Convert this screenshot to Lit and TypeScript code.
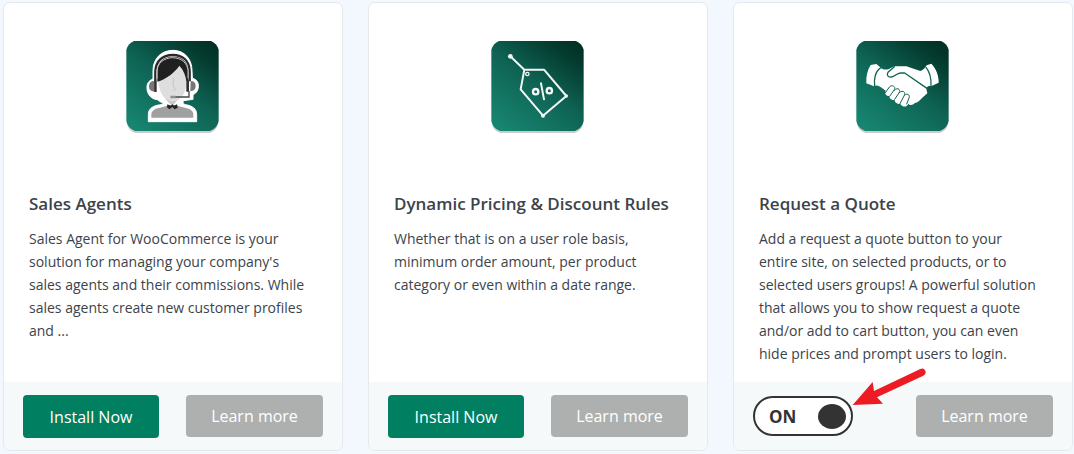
import { LitElement, html, svg, css } from "lit";
import { customElement, property } from "lit/decorators.js";

type IconName = "agent" | "tag" | "handshake";

interface Addon {
  icon: IconName;
  title: string;
  text: string;
  installed: boolean;
}

const ADDONS: Addon[] = [
  {
    icon: "agent",
    title: "Sales Agents",
    text: "Sales Agent for WooCommerce is your solution for managing your company's sales agents and their commissions. While sales agents create new customer profiles and ...",
    installed: false,
  },
  {
    icon: "tag",
    title: "Dynamic Pricing & Discount Rules",
    text: "Whether that is on a user role basis, minimum order amount, per product category or even within a date range.",
    installed: false,
  },
  {
    icon: "handshake",
    title: "Request a Quote",
    text: "Add a request a quote button to your entire site, on selected products, or to selected users groups! A powerful solution that allows you to show request a quote and/or add to cart button, you can even hide prices and prompt users to login.",
    installed: true,
  },
];

const GLYPHS = {
  agent: svg`
    <path d="M189 61C152 61 129 88 129 122L129 147C114 153 110 163 111 176C112 193 123 207 142 209C147 213 151 216 158 218C160 224 154 223 145 225C124 230 115 238 115 254L115 275H260V254C260 237 249 228 227 224C219 222 218 219 220 212L249 208V194C261 189 266 178 265 165C264 154 259 149 247 144L246 122C246 88 224 61 189 61Z" fill="#fff" stroke="#fff" stroke-width="3" stroke-linejoin="round"/>
    <path d="M124 263V252C125 241 136 235 150 233L178 226H196L225 233C240 236 250 242 250 254V263Z" fill="#a0a0a0"/>
    <path d="M166 207L187 229L205 207V190H166Z" fill="#c9c9c9"/>
    <path d="M144 141C144 181 160 213 187 214C216 214 231 184 231 143L207 105Z" fill="#dedede"/>
    <path d="M191 144C190 158 187 167 194 174C197 178 195 182 190 182" fill="none" stroke="#c2c2c2" stroke-width="3"/>
    <path d="M142 155V125C143 94 161 80 189 80C218 80 234 97 235 125V153H229C227 137 221 121 208 107C198 124 167 149 142 155Z" fill="#202020"/>
    <path d="M136 154V124C137 94 157 75 188 75C220 75 238 94 239 124V154" fill="none" stroke="#292929" stroke-width="7"/>
    <path d="M141 145V122C143 99 161 84 188 83C215 84 232 99 234 122V145" fill="none" stroke="#c8c8c8" stroke-width="3"/>
    <path d="M132 153C122 153 117 159 117 169C117 180 123 185 135 185V153ZM242 153C252 153 257 158 257 168C257 177 252 183 241 184Z" fill="#777"/>
    <path d="M133 152H140V186H133ZM229 151H237V185H229Z" fill="#303030"/>
    <path d="M237 183V201H195" fill="none" stroke="#484848" stroke-width="4"/>
    <path d="M181 201H197" stroke="#929292" stroke-width="7"/>
    <path d="M172 223L182 227L187 223L192 227L201 223L203 233L194 238L187 231L178 238L171 232Z" fill="#222"/>
  `,
  tag: svg`
    <g fill="none" stroke="#f3f7f5" stroke-width="6" stroke-linejoin="round" stroke-linecap="round">
      <path d="M106 79L148 119H207L274 198L204 257L137 178L148 119"/>
      <circle cx="157" cy="132" r="5" stroke-width="4"/>
      <circle cx="182" cy="185" r="8" stroke-width="7"/>
      <circle cx="223" cy="182" r="8" stroke-width="7"/>
      <path d="M198 160L207 208"/>
    </g>
    <g fill="#f3f7f5"><circle cx="106" cy="79" r="7"/><circle cx="274" cy="198" r="5"/><circle cx="204" cy="257" r="6"/></g>
  `,
  handshake: svg`
    <path d="M92 105L109 102L126 116C135 120 143 120 152 114L163 109H199L241 123C250 120 257 112 260 106L274 101C289 116 297 138 296 158L273 169C266 167 263 167 259 176L262 190L246 204C239 211 234 218 224 219C218 227 208 226 205 221C200 232 189 233 181 222C169 223 163 214 164 210C152 211 147 203 148 198C138 198 133 190 137 182L126 174C117 168 110 164 102 169L79 160C78 139 82 120 92 105Z" fill="#fff"/>
    <g fill="none" stroke="#126554" stroke-width="4" stroke-linecap="round" stroke-linejoin="round">
      <path d="M123 113C106 123 101 147 104 168M258 112C271 128 274 148 273 168"/>
      <path d="M163 110L144 127C138 135 145 143 154 141C166 139 169 130 182 129H194L262 176"/>
      <path d="M136 188L149 170C157 163 168 171 163 179L149 199M163 181C172 170 182 179 178 187L164 208M178 188C188 178 198 187 193 196L180 221M193 196C203 187 211 196 207 204L200 222" stroke-width="3"/>
    </g>
  `,
};

@customElement("addon-icon")
class AddonIcon extends LitElement {
  @property() name: IconName = "agent";

  static styles = css`
    :host { display: block; }
    .icon { display: block; width: 93px; height: 93px; }
  `;

  render() {
    return html`
      <svg class="icon" viewBox="48 33 279 279" aria-hidden="true">
        <defs>
          <linearGradient id="tile" x1="0.15" y1="1" x2="0.9" y2="0">
            <stop offset="0" stop-color="#178571" />
            <stop offset="0.5" stop-color="#0e6353" />
            <stop offset="0.85" stop-color="#043c30" />
            <stop offset="1" stop-color="#023026" />
          </linearGradient>
        </defs>
        <rect x="51" y="48" width="273" height="261" rx="32" fill="#c9cccb" />
        <path d="M72 33H303Q320 40 326 59V273Q322 295 300 303H75Q53 295 49 273V59Q55 40 72 33Z" fill="url(#tile)" />
        ${GLYPHS[this.name]}
      </svg>
    `;
  }
}

@customElement("addon-card")
class AddonCard extends LitElement {
  @property({ attribute: false }) addon!: Addon;

  static styles = css`
    :host {
      display: flex;
      flex-direction: column;
      box-sizing: border-box;
      min-width: 0;
      overflow: hidden;
      border: 1px solid #e6e8ea;
      border-radius: 7px;
      background: #fff;
      color: #3c434a;
    }
    .body { flex: 1; padding: 38px 27px 17px 25px; }
    .icon { display: flex; justify-content: center; padding-bottom: 56px; }
    .title { margin: 0; font-size: 17px; line-height: 28px; font-weight: 600; }
    .text { margin: 9px 0 0; padding-right: 4px; font-size: 14px; line-height: 23px; }
    .footer {
      display: flex;
      justify-content: space-between;
      align-items: flex-start;
      box-sizing: border-box;
      min-height: 68px;
      padding: 13px 19px 12px;
      background: #f5f9fa;
    }
    .btn {
      box-sizing: border-box;
      width: 137px;
      height: 42px;
      border: 0;
      border-radius: 4px;
      padding: 0;
      font: inherit;
      font-size: 16px;
      line-height: 42px;
      text-align: center;
      text-decoration: none;
      color: #fff;
      cursor: pointer;
    }
    .install { width: 136px; height: 43px; background: #008060; }
    .learn { background: #aeb0af; }
    .switch { position: relative; display: block; cursor: pointer; }
    .track {
      display: flex;
      align-items: center;
      justify-content: space-between;
      box-sizing: border-box;
      width: 100px;
      height: 40px;
      margin-top: 1px;
      padding: 0 5px 0 14px;
      border: 2px solid #333;
      border-radius: 20px;
      background: #fff;
      color: #333;
      font-size: 17px;
      font-weight: 700;
    }
    .knob { width: 28px; height: 25px; border-radius: 50%; background: #333; }
    .check { position: absolute; inset: 0; margin: 0; opacity: 0; cursor: pointer; }
    .arrow {
      position: absolute;
      left: 99px;
      top: -28px;
      width: 74px;
      height: 40px;
      pointer-events: none;
    }
  `;

  private renderAction() {
    if (!this.addon.installed) {
      return html`<button class="btn install" type="button">Install Now</button>`;
    }
    return html`
      <label class="switch">
        <input class="check" type="checkbox" role="switch" checked aria-label=${this.addon.title} />
        <span class="track">ON<span class="knob"></span></span>
        <svg class="arrow" viewBox="366 21 222 120" aria-hidden="true">
          <path d="M368 135L428 66L432 93L571 27Q581 23 586 32Q590 42 580 47L441 112L459 131Z" fill="#ed1c24" />
        </svg>
      </label>
    `;
  }

  render() {
    return html`
      <div class="body">
        <div class="icon"><addon-icon name=${this.addon.icon}></addon-icon></div>
        <h2 class="title">${this.addon.title}</h2>
        <p class="text">${this.addon.text}</p>
      </div>
      <div class="footer">
        ${this.renderAction()}
        <a class="btn learn" href="#">Learn more</a>
      </div>
    `;
  }
}

@customElement("app-root")
class AppRoot extends LitElement {
  static styles = css`
    :host {
      display: block;
      box-sizing: border-box;
      min-height: 100vh;
      padding: 2px 1px 3px 3px;
      background: #f2f8fd;
      font-family: "Open Sans", "Noto Sans", sans-serif;
    }
    .grid {
      display: grid;
      grid-template-columns: repeat(auto-fit, minmax(300px, 1fr));
      gap: 25px;
    }
  `;

  render() {
    return html`
      <main class="grid">
        ${ADDONS.map((addon) => html`<addon-card .addon=${addon}></addon-card>`)}
      </main>
    `;
  }
}
